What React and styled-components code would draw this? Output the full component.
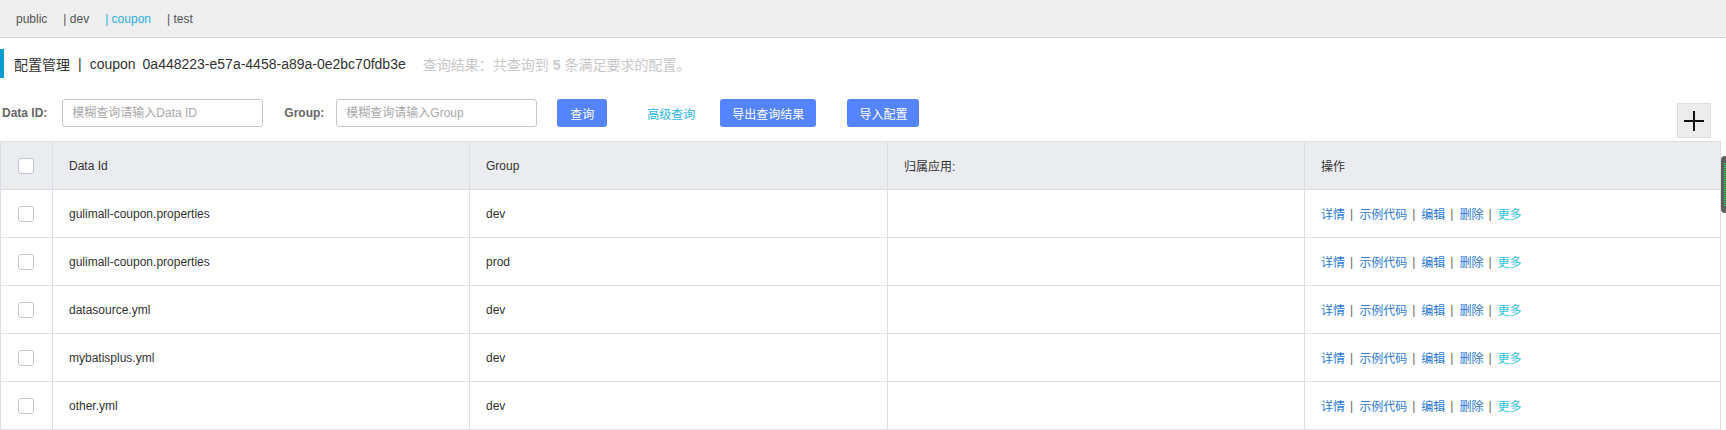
import React from "react";
import styled, { createGlobalStyle } from "styled-components";

const GlobalStyle = createGlobalStyle`
  html, body {
    margin: 0;
    padding: 0;
    background: #fff;
    overflow: hidden;
  }
  body {
    font-family: "Liberation Sans", "Noto Sans CJK SC", sans-serif;
    font-size: 12px;
    color: #333;
  }
`;

const Page = styled.div`
  position: relative;
  width: 1726px;
  height: 430px;
`;

const NsBar = styled.div`
  display: flex;
  align-items: center;
  height: 37px;
  padding-left: 16px;
  background: #efefef;
  border-bottom: 1px solid #d4d4d4;
`;

const NsItem = styled.span`
  margin-left: ${(p) => (p.$first ? 0 : "16px")};
  color: ${(p) => (p.$active ? "#29b0dc" : "#555")};
  white-space: pre;
`;

const TitleRow = styled.div`
  display: flex;
  align-items: center;
  height: 29px;
  margin-top: 11px;
  padding-left: 10px;
  border-left: 4px solid #0e9ad0;
  font-size: 14px;
  color: #333;
`;

const TitleSep = styled.span`
  margin: 0 8px;
`;

const NsId = styled.span`
  margin-left: 7px;
`;

const Summary = styled.span`
  margin-left: 17px;
  font-size: 14px;
  color: #c8c8c8;
  white-space: pre;

  b {
    margin: 0 4px;
  }
`;

const Toolbar = styled.div`
  display: flex;
  align-items: flex-start;
  margin-top: 21px;
  padding: 0 15px 0 2px;
`;

const Label = styled.label`
  display: flex;
  align-items: center;
  height: 28px;
  margin-left: ${(p) => p.$gap || 0}px;
  margin-right: ${(p) => p.$space || 12}px;
  font-weight: bold;
  color: #666;
`;

const Input = styled.input`
  box-sizing: border-box;
  width: 201px;
  height: 28px;
  padding: 0 9px;
  border: 1px solid #c4c6cf;
  border-radius: 3px;
  font-family: inherit;
  font-size: 12px;
  color: #333;
  outline: none;

  &::placeholder {
    color: #a9a9a9;
  }
`;

const Button = styled.button`
  box-sizing: border-box;
  height: 28px;
  min-width: ${(p) => p.$w || 0}px;
  margin-left: ${(p) => p.$gap || 0}px;
  padding: 0 12px;
  border: none;
  border-radius: 3px;
  background: #5584ff;
  color: #fff;
  font-family: inherit;
  font-size: 12px;
`;

const TextLink = styled.span`
  display: flex;
  align-items: center;
  height: 28px;
  margin-left: ${(p) => p.$gap || 0}px;
  color: #2bb8df;
`;

const AddButton = styled.button`
  display: flex;
  align-items: center;
  justify-content: center;
  box-sizing: border-box;
  width: 34px;
  height: 35px;
  margin: 4px 0 0 auto;
  padding: 0;
  background: #ececec;
  border: 1px solid #dedede;
`;

const Table = styled.div`
  box-sizing: border-box;
  width: 1721px;
  margin-top: 3px;
  border: 1px solid #dcdee3;
  border-bottom: none;
`;

const Row = styled.div`
  display: grid;
  grid-template-columns: 52px 417px 418px 417px 1fr;
  height: 48px;
  background: ${(p) => (p.$head ? "#ebecf0" : "#fff")};
  border-bottom: 1px solid #dcdee3;
  box-sizing: border-box;
`;

const Cell = styled.div`
  display: flex;
  align-items: center;
  justify-content: ${(p) => (p.$center ? "center" : "flex-start")};
  padding-left: ${(p) => (p.$center ? 0 : "16px")};
  border-right: ${(p) => (p.$last ? "none" : "1px solid #dcdee3")};
  color: #333;
  white-space: nowrap;
`;

const Checkbox = styled.span`
  display: block;
  box-sizing: border-box;
  width: 16px;
  height: 16px;
  margin-right: 1px;
  border: 1px solid #c4c6cf;
  border-radius: 3px;
  background: #fff;
`;

const OpLink = styled.span`
  color: ${(p) => (p.$more ? "#2fc2e3" : "#2a79d3")};
`;

const OpSep = styled.span`
  margin: 0 6px 0 5px;
  color: #666;
`;

const ScrollMark = styled.div`
  position: absolute;
  left: 1721px;
  top: 156px;
  width: 8px;
  height: 57px;
  border-radius: 4px 0 0 4px;
  background: #5e5e5e;

  &::after {
    content: "";
    position: absolute;
    left: 3px;
    top: 7px;
    right: 0;
    bottom: 7px;
    background: repeating-linear-gradient(
      to bottom,
      #2fd35a 0,
      #2fd35a 1px,
      #3a7a46 1px,
      #3a7a46 2px
    );
  }
`;

const namespaces = [
  { name: "public" },
  { name: "| dev" },
  { name: "| coupon", active: true },
  { name: "| test" },
];

const configs = [
  { dataId: "gulimall-coupon.properties", group: "dev" },
  { dataId: "gulimall-coupon.properties", group: "prod" },
  { dataId: "datasource.yml", group: "dev" },
  { dataId: "mybatisplus.yml", group: "dev" },
  { dataId: "other.yml", group: "dev" },
];

function Ops() {
  return (
    <>
      <OpLink>详情</OpLink>
      <OpSep>|</OpSep>
      <OpLink>示例代码</OpLink>
      <OpSep>|</OpSep>
      <OpLink>编辑</OpLink>
      <OpSep>|</OpSep>
      <OpLink>删除</OpLink>
      <OpSep>|</OpSep>
      <OpLink $more>更多</OpLink>
    </>
  );
}

export default function App() {
  return (
    <Page>
      <GlobalStyle />
      <NsBar>
        {namespaces.map((ns, i) => (
          <NsItem key={ns.name} $first={i === 0} $active={ns.active}>
            {ns.name}
          </NsItem>
        ))}
      </NsBar>

      <TitleRow>
        <span>配置管理</span>
        <TitleSep>|</TitleSep>
        <span>coupon</span>
        <NsId>0a448223-e57a-4458-a89a-0e2bc70fdb3e</NsId>
        <Summary>
          查询结果：共查询到<b>5</b>条满足要求的配置。
        </Summary>
      </TitleRow>

      <Toolbar>
        <Label $space={15}>Data ID:</Label>
        <Input placeholder="模糊查询请输入Data ID" />
        <Label $gap={21}>Group:</Label>
        <Input placeholder="模糊查询请输入Group" />
        <Button $gap={20} $w={50}>查询</Button>
        <TextLink $gap={40}>高级查询</TextLink>
        <Button $gap={25}>导出查询结果</Button>
        <Button $gap={31}>导入配置</Button>
        <AddButton>
          <svg width="20" height="20" viewBox="0 0 20 20">
            <line x1="0" y1="10" x2="20" y2="10" stroke="#111" strokeWidth="2" />
            <line x1="10" y1="0" x2="10" y2="20" stroke="#111" strokeWidth="2" />
          </svg>
        </AddButton>
      </Toolbar>

      <Table>
        <Row $head>
          <Cell $center>
            <Checkbox />
          </Cell>
          <Cell>Data Id</Cell>
          <Cell>Group</Cell>
          <Cell>归属应用:</Cell>
          <Cell $last>操作</Cell>
        </Row>
        {configs.map((c, i) => (
          <Row key={i}>
            <Cell $center>
              <Checkbox />
            </Cell>
            <Cell>{c.dataId}</Cell>
            <Cell>{c.group}</Cell>
            <Cell />
            <Cell $last>
              <Ops />
            </Cell>
          </Row>
        ))}
      </Table>

      <ScrollMark />
    </Page>
  );
}
